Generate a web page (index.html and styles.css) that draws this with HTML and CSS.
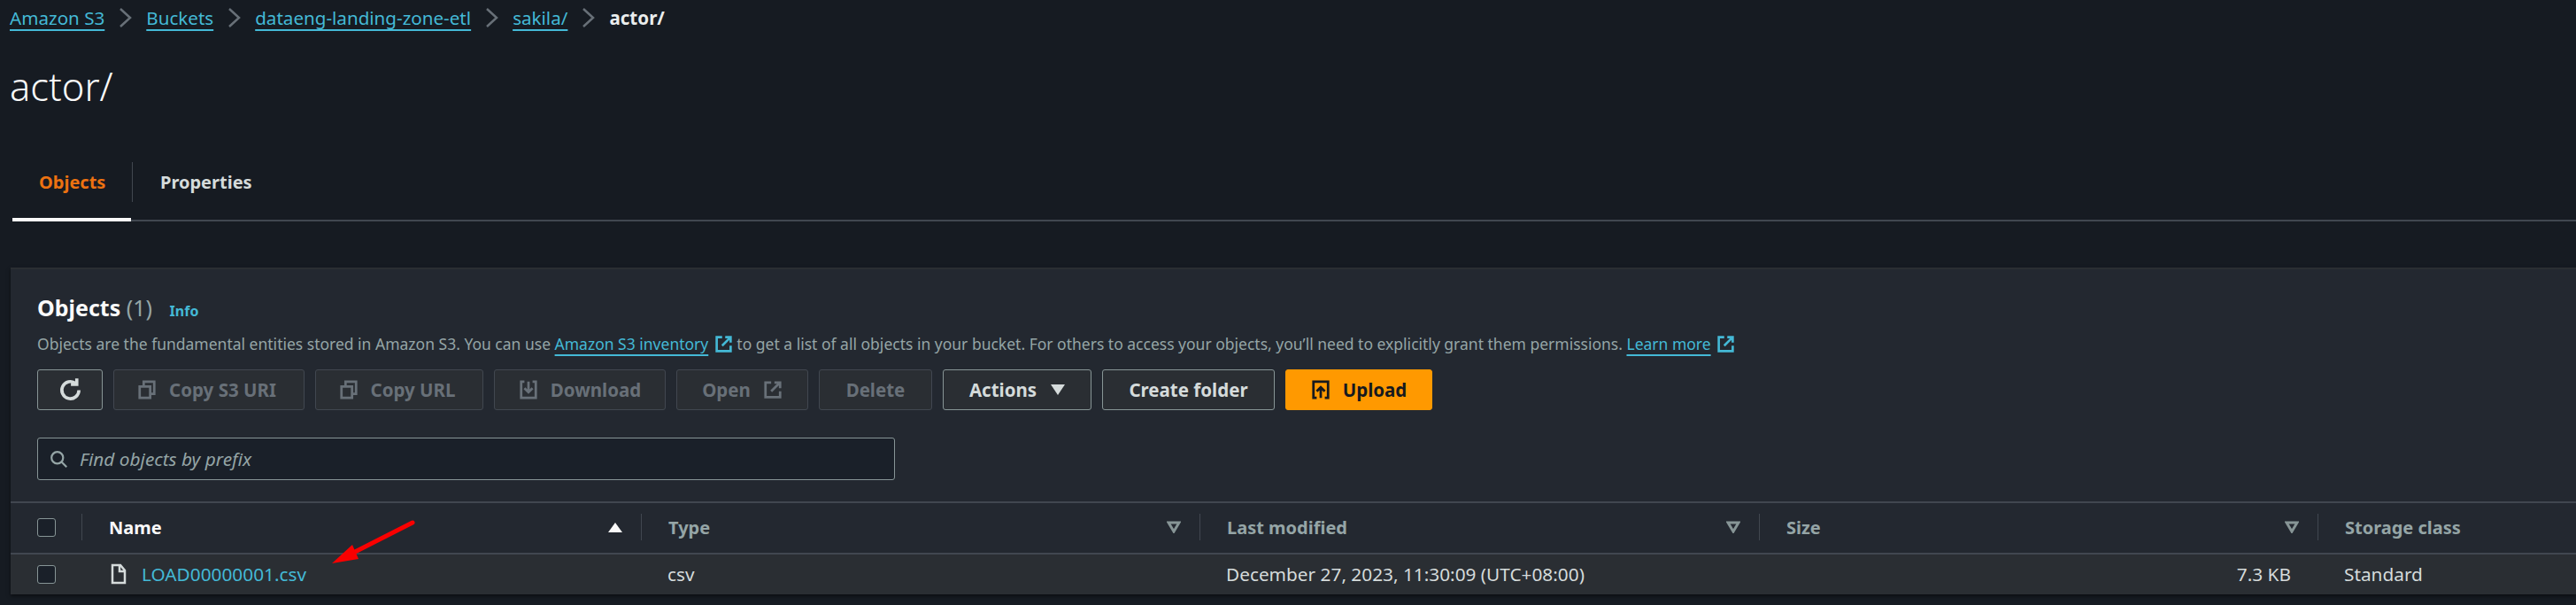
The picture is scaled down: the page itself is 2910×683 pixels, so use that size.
FILE: index.html
```html
<!DOCTYPE html>
<html lang="en">
<head>
<meta charset="utf-8">
<title>actor/ - S3</title>
<link rel="stylesheet" href="styles.css">
</head>
<body>
<main class="page">
  <nav class="crumbs">
    <a class="link" href="#">Amazon S3</a>
    <svg class="chev" viewBox="0 0 16 24"><path d="M2 2l11 10L2 22"/></svg>
    <a class="link" href="#">Buckets</a>
    <svg class="chev" viewBox="0 0 16 24"><path d="M2 2l11 10L2 22"/></svg>
    <a class="link" href="#">dataeng-landing-zone-etl</a>
    <svg class="chev" viewBox="0 0 16 24"><path d="M2 2l11 10L2 22"/></svg>
    <a class="link" href="#">sakila/</a>
    <svg class="chev" viewBox="0 0 16 24"><path d="M2 2l11 10L2 22"/></svg>
    <span class="crumb-current">actor/</span>
  </nav>
  <h1 class="title">actor/</h1>
  <div class="tabs">
    <div class="tab tab-active">Objects</div>
    <div class="tab-sep"></div>
    <div class="tab">Properties</div>
  </div>
  <section class="card">
    <div class="card-head">
      <h2 class="card-title">Objects <span class="count">(1)</span> <a class="info" href="#">Info</a></h2>
      <p class="desc">Objects are the fundamental entities stored in Amazon S3. You can use <a class="link" href="#">Amazon S3 inventory</a> <svg class="ext" viewBox="0 0 24 24"><path d="M10 3H3v18h18v-7M14 3h7v7M21 3L10 14"/></svg> to get a list of all objects in your bucket. For others to access your objects, you’ll need to explicitly grant them permissions. <a class="link" href="#">Learn more</a> <svg class="ext" viewBox="0 0 24 24"><path d="M10 3H3v18h18v-7M14 3h7v7M21 3L10 14"/></svg></p>
      <div class="actions">
        <button class="btn btn-refresh"><svg class="ic" viewBox="0 0 24 24"><path d="M20 12a8 8 0 1 1-3-6.300M18 1v5.500h-5.500"/></svg></button>
        <button class="btn off b-s3"><svg class="ic" viewBox="0 0 24 24"><path d="M3 8h13v14H3zM8 8V2h13v15h-5"/></svg>Copy S3 URI</button>
        <button class="btn off b-url"><svg class="ic" viewBox="0 0 24 24"><path d="M3 8h13v14H3zM8 8V2h13v15h-5"/></svg>Copy URL</button>
        <button class="btn off b-dl"><svg class="ic" viewBox="0 0 24 24"><path d="M7 2H3v20h18V2h-4M12 2v13M7 10l5 5 5-5"/></svg>Download</button>
        <button class="btn off b-open">Open<svg class="ic" viewBox="0 0 24 24"><path d="M10 3H3v18h18v-7M14 3h7v7M21 3L10 14"/></svg></button>
        <button class="btn off b-del">Delete</button>
        <button class="btn b-act">Actions<span class="tri-down"></span></button>
        <button class="btn b-new">Create folder</button>
        <button class="btn btn-primary b-up"><svg class="ic" viewBox="0 0 24 24"><path d="M7 22H3V2h18v20h-4M12 22V9M7 14l5-5 5 5"/></svg>Upload</button>
      </div>
      <div class="search">
        <svg class="search-ic" viewBox="0 0 24 24"><circle cx="10" cy="10" r="7.500"/><path d="M15.500 15.500L22 22"/></svg>
        <span class="placeholder">Find objects by prefix</span>
      </div>
    </div>
    <div class="row head">
      <div class="cell c-check"><span class="check"></span></div>
      <div class="cell sep"><b class="th-active">Name</b><span class="sort-up"></span></div>
      <div class="cell sep"><b>Type</b><svg class="filter" viewBox="0 0 16 14"><path d="M2 2h12L8 12z"/></svg></div>
      <div class="cell sep"><b>Last modified</b><svg class="filter" viewBox="0 0 16 14"><path d="M2 2h12L8 12z"/></svg></div>
      <div class="cell sep"><b>Size</b><svg class="filter" viewBox="0 0 16 14"><path d="M2 2h12L8 12z"/></svg></div>
      <div class="cell sep"><b>Storage class</b></div>
    </div>
    <div class="row body">
      <div class="cell c-check"><span class="check"></span></div>
      <div class="cell"><svg class="file" viewBox="0 0 18 24"><path d="M2 2h9l5 6v14H2zM10 2v7h6"/></svg><a class="file-link" href="#">LOAD00000001.csv</a></div>
      <div class="cell">csv</div>
      <div class="cell">December 27, 2023, 11:30:09 (UTC+08:00)</div>
      <div class="cell right">7.3 KB</div>
      <div class="cell">Standard</div>
    </div>
  </section>
  <svg class="arrow" viewBox="0 0 94 51"><path d="M26 37L91 4"/><path class="head-fill" d="M0 50L23 29 30 45z"/></svg>
</main>
</body>
</html>
```
FILE: styles.css
```css
* { box-sizing: border-box; }
html, body { margin: 0; padding: 0; }
body {
  background: #161b22;
  color: #d5dbdb;
  font-family: "Noto Sans", "Open Sans", sans-serif;
  font-size: 16px;
  height: 683px;
  overflow: hidden;
}
.page { position: relative; padding: 0 0 0 12px; height: 683px; }
.link { color: #44b9d6; text-decoration: underline; text-underline-offset: 5px; text-decoration-thickness: 2px; }

.crumbs { display: flex; align-items: center; height: 40px; font-size: 20.600px; margin-left: -1px; }
.crumbs .link { white-space: nowrap; }
.chev { width: 16px; height: 24px; margin: 0 15.500px; fill: none; stroke: #687078; stroke-width: 2.500; }
.crumb-current { font-weight: 700; color: #eaeded; }

.title { margin: 0 0 0 -1px; height: 103px; padding-top: 32px; font-size: 43.500px; line-height: 50px; font-weight: 300; color: #fafafa; }

.tabs { display: flex; align-items: center; height: 107px; border-bottom: 2px solid #414750; padding-top: 20px; margin-left: 2px; }
.tab { font-size: 20px; font-weight: 700; color: #d5dbdb; padding: 0 31px; white-space: nowrap; }
.tab-active { color: #ec7211; width: 134px; align-self: stretch; display: flex; align-items: center; padding: 0 30px; position: relative; }
.tab-active::after { content: ""; position: absolute; left: 0; right: 0; bottom: -2px; height: 4px; background: #fafafa; }
.tab-sep { width: 1px; height: 45px; background: #414750; margin-left: 1px; }

.card { margin-top: 52px; background: #232830; border-top: 2px solid #2a2e33; box-shadow: 0 2px 4px rgba(0,0,0,.5); }
.card-head { padding: 0 30px; height: 262px; }
.card-title { margin: 0; padding-top: 24px; font-size: 25px; line-height: 38px; font-weight: 700; color: #fafafa; }
.count { font-weight: 400; color: #95a5a6; }
.info { color: #44b9d6; font-size: 16px; font-weight: 700; text-decoration: none; margin-left: 13px; }
.desc { margin: 6px 0 0; font-size: 17.500px; line-height: 24px; color: #95a5a6; white-space: nowrap; }
.ext { width: 21px; height: 21px; fill: none; stroke: #44b9d6; stroke-width: 3; vertical-align: -4px; margin-left: 2px; }

.actions { display: flex; gap: 12px; margin-top: 17px; }
.btn {
  height: 46px; padding: 0; display: flex; align-items: center; justify-content: center; gap: 14px;
  font: 700 20.500px "Noto Sans", sans-serif; color: #d5dbdb;
  background: #2a2e33; border: 1px solid #879596; border-radius: 3px;
}
.ic { width: 22px; height: 22px; fill: none; stroke: currentColor; stroke-width: 3; }
.btn-refresh { width: 74px; }
.btn-refresh .ic { width: 29px; height: 29px; }
.off { color: #687078; border-color: #414750; }
.b-s3 { width: 216px; padding-right: 5px; }
.b-url { width: 190px; padding-right: 5px; }
.b-dl { width: 194px; }
.b-open { width: 149px; }
.b-del { width: 128px; }
.b-act { width: 168px; gap: 16px; }
.b-new { width: 195px; }
.b-up { width: 166px; }
.btn-primary { background: #ff9900; border-color: #ff9900; color: #16191f; }
.tri-down { width: 0; height: 0; border-left: 8px solid transparent; border-right: 8px solid transparent; border-top: 12px solid #d5dbdb; }

.search { display: flex; align-items: center; gap: 13px; margin-top: 31px; width: 969px; height: 48px; background: #1a2029; border: 1px solid #879596; border-radius: 3px; padding-left: 13px; }
.search-ic { width: 21px; height: 21px; fill: none; stroke: #95a5a6; stroke-width: 2.500; }
.placeholder { font-style: italic; font-size: 20.800px; color: #95a5a6; }

.row { display: grid; grid-template-columns: 80px 632px 631px 632px 631px 1fr; align-items: center; border-top: 2px solid #414750; }
.row.head { height: 58px; color: #95a5a6; font-size: 20px; padding-bottom: 2px; }
.row.body { height: 47px; background: #2a2e33; font-size: 20.800px; padding-bottom: 1px; }
.cell { display: flex; align-items: center; padding: 0 30px; height: 30px; white-space: nowrap; }
.c-check { padding: 0 0 0 30px; }
.sep { border-left: 1px solid #414750; }
.right { justify-content: flex-end; }
.head .cell b { flex: 1; font-weight: 700; }
.head .cell { padding-right: 21px; }
.th-active { color: #fafafa; }
.check { width: 21px; height: 21px; border: 1.500px solid #879596; border-radius: 3px; background: #1a2029; }
.sort-up { width: 0; height: 0; border-left: 8px solid transparent; border-right: 8px solid transparent; border-bottom: 11px solid #fafafa; }
.filter { width: 16px; height: 14px; fill: none; stroke: #879596; stroke-width: 3; }
.file { width: 18px; height: 24px; margin: 0 17px 0 3px; fill: none; stroke: #d5dbdb; stroke-width: 2.500; }
.file-link { color: #44b9d6; text-decoration: none; }

.arrow { position: absolute; left: 375px; top: 586px; width: 94px; height: 51px; overflow: visible; fill: none; stroke: #f90000; stroke-width: 5; stroke-linecap: round; }
.head-fill { fill: #f90000; stroke: none; }
```
